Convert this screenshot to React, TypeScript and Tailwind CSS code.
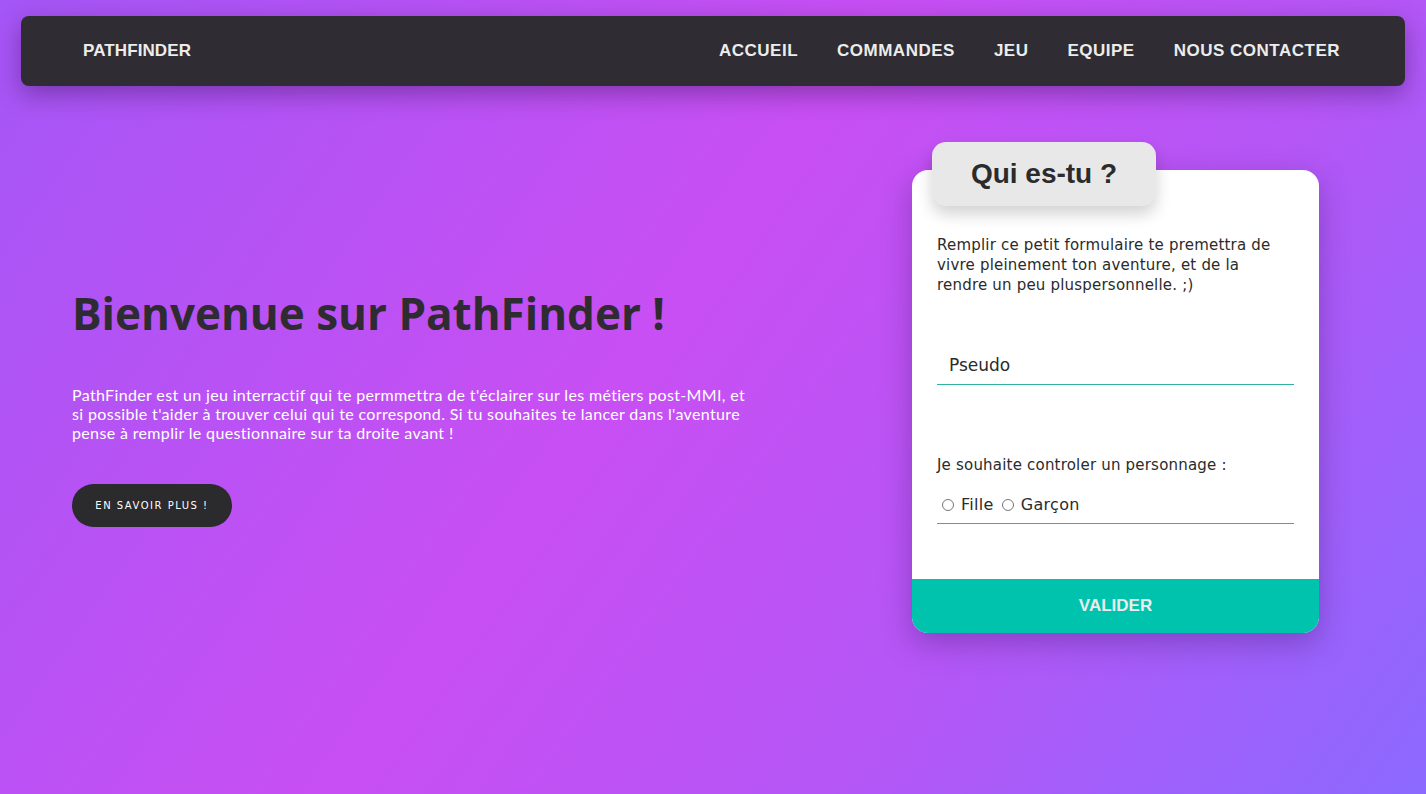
import { useState } from "react";

const navLinks = ["ACCUEIL", "COMMANDES", "JEU", "EQUIPE", "NOUS CONTACTER"];

function Navbar() {
  return (
    <nav className="h-[70px] rounded-lg bg-[#2f2c33] shadow-[0_8px_24px_rgba(60,20,90,0.45)] flex items-center justify-between pl-[62px] pr-[65px] font-['Liberation_Sans',sans-serif]">
      <a href="#" className="text-[17px] font-bold tracking-[0.1px] text-[#ececec]">
        PATHFINDER
      </a>
      <ul className="flex items-center gap-[39px]">
        {navLinks.map((link) => (
          <li key={link}>
            <a href="#" className="text-[17px] font-bold tracking-[0.5px] text-[#ececec]">
              {link}
            </a>
          </li>
        ))}
      </ul>
    </nav>
  );
}

function Intro() {
  return (
    <section className="w-[700px] pt-[145px] font-['Lato',sans-serif]">
      <h1 className="font-['Open_Sans',sans-serif] text-[44px] leading-[52px] font-bold text-[#2e2b31]">
        Bienvenue sur PathFinder !
      </h1>
      <p className="mt-[46px] text-[16px] leading-[19px] tracking-[0.35px] text-white">
        PathFinder est un jeu interractif qui te permmettra de t'éclairer sur les métiers post-MMI, et
        <br />
        si possible t'aider à trouver celui qui te correspond. Si tu souhaites te lancer dans l'aventure
        <br />
        pense à remplir le questionnaire sur ta droite avant !
      </p>
      <button className="mt-[42px] h-[43px] w-[160px] rounded-full bg-[#2b2a2c] font-['DejaVu_Sans',sans-serif] text-[10px] tracking-[1.5px] text-white">
        EN SAVOIR PLUS !
      </button>
    </section>
  );
}

function ProfileForm() {
  const [pseudo, setPseudo] = useState("");
  const [gender, setGender] = useState("");

  return (
    <div className="w-[407px] font-['DejaVu_Sans',sans-serif]">
      <div className="relative z-10 ml-5 h-[64px] w-[224px] rounded-[14px] bg-[#e8e8e8] shadow-[0_8px_16px_rgba(0,0,0,0.18)] flex items-center justify-center">
        <h2 className="font-['Liberation_Sans',sans-serif] text-[28px] font-bold text-[#2b2b2b]">Qui es-tu ?</h2>
      </div>
      <form
        className="-mt-9 rounded-2xl bg-white shadow-[0_10px_30px_rgba(60,20,100,0.35)] overflow-hidden"
        onSubmit={(e) => e.preventDefault()}
      >
        <div className="px-[25px] pt-[65px] pb-[55px] text-[#2b2b2b]">
          <p className="text-[15px] leading-[20px] tracking-[0.2px]">
            Remplir ce petit formulaire te premettra de
            <br />
            vivre pleinement ton aventure, et de la
            <br />
            rendre un peu pluspersonnelle. ;)
          </p>
          <input
            type="text"
            placeholder="Pseudo"
            value={pseudo}
            onChange={(e) => setPseudo(e.target.value)}
            className="mt-[58px] w-full border-b border-[#2fb3a2] px-3 pb-[5px] text-[17px] text-[#2b2b2b] placeholder:text-[#2b2b2b] outline-none"
          />
          <p className="mt-[70px] text-[15px] leading-[20px] tracking-[0.2px]">Je souhaite controler un personnage :</p>
          <div className="mt-[18px] flex items-center gap-[8px] border-b border-[#2fb3a2] pl-[5px] pb-[6px] text-[16px] tracking-[0.3px]">
            <label className="flex items-center gap-[7px]">
              <input
                type="radio"
                name="gender"
                checked={gender === "fille"}
                onChange={() => setGender("fille")}
                className="h-[12px] w-[12px]"
              />
              Fille
            </label>
            <label className="flex items-center gap-[7px]">
              <input
                type="radio"
                name="gender"
                checked={gender === "garcon"}
                onChange={() => setGender("garcon")}
                className="h-[12px] w-[12px]"
              />
              Garçon
            </label>
          </div>
        </div>
        <button type="submit" className="h-[54px] w-full bg-[#00c3ae] font-['Liberation_Sans',sans-serif] text-[17px] font-bold text-[#ececec]">
          VALIDER
        </button>
      </form>
    </div>
  );
}

export default function App() {
  return (
    <div className="min-h-screen bg-[linear-gradient(125deg,#a556f6_0%,#c84ff3_45%,#b556f6_70%,#8b69ff_100%)] px-[21px] pt-4 pb-10">
      <Navbar />
      <main className="mt-[56px] flex items-start justify-between pl-[51px] pr-[86px]">
        <Intro />
        <ProfileForm />
      </main>
    </div>
  );
}
